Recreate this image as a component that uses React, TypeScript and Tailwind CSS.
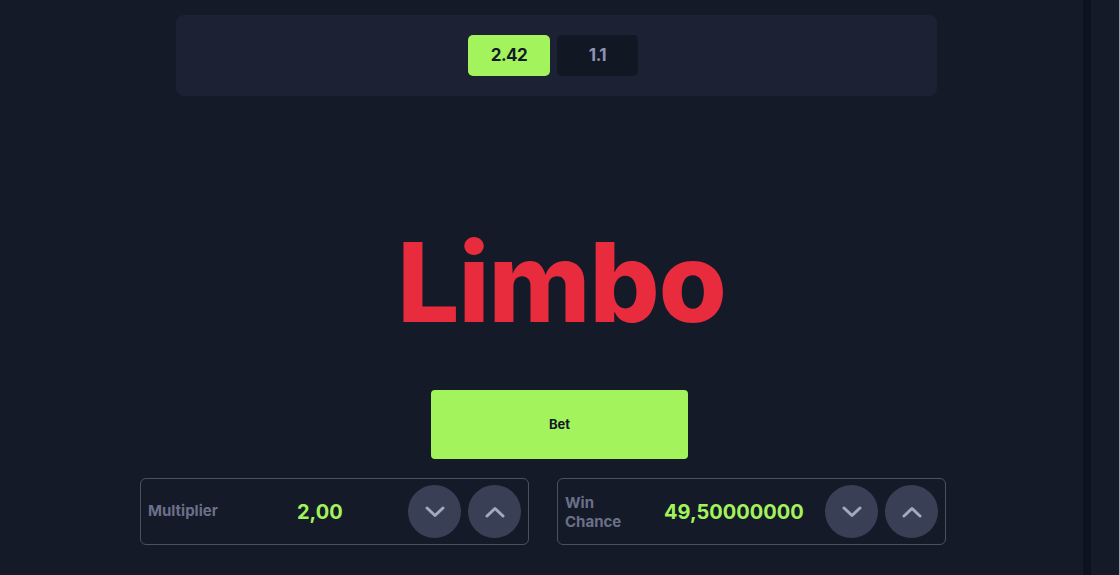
import React from "react";

function Chevron({ up }: { up?: boolean }) {
  return (
    <svg width="20" height="12" viewBox="0 0 20 12" fill="none">
      <path
        d={up ? "M2 10 L10 2.5 L18 10" : "M2 2 L10 9.5 L18 2"}
        stroke="#a3a8c4"
        strokeWidth="3"
        strokeLinecap="round"
        strokeLinejoin="round"
      />
    </svg>
  );
}

function Circles() {
  return (
    <div className="flex gap-[7px] items-center">
      <button className="w-[53px] h-[53px] rounded-full bg-[#394055] flex items-center justify-center">
        <Chevron />
      </button>
      <button className="w-[53px] h-[53px] rounded-full bg-[#394055] flex items-center justify-center">
        <Chevron up />
      </button>
    </div>
  );
}

export default function App() {
  const font = { fontFamily: "Inter, 'Noto Sans', sans-serif" };
  return (
    <div className="w-[1120px] h-[575px] bg-[#141a28] flex overflow-hidden" style={font}>
      <div className="w-[1083px] flex flex-col">
        <div className="pt-[15px] pl-[176px]">
          <div className="w-[761px] h-[81px] bg-[#1c2134] rounded-[8px] flex items-center pl-[292px] gap-[7px]">
            <div className="w-[82px] h-[41px] rounded-[5px] bg-[#a3f35c] flex items-center justify-center text-[17px] font-bold text-[#141a28] tracking-[-0.5px]">
              2.42
            </div>
            <div className="w-[81px] h-[41px] rounded-[5px] bg-[#121724] flex items-center justify-center text-[17px] font-bold text-[#8d93b5] tracking-[-0.5px]">
              1.1
            </div>
          </div>
        </div>
        <div className="h-[294px] flex items-end justify-center pl-[40px]">
          <div className="text-[110px] leading-none font-extrabold text-[#e82c3e] tracking-[-1px] mb-[53px]">
            Limbo
          </div>
        </div>
        <div className="pl-[431px] pt-[0px]">
          <button className="w-[257px] h-[69px] rounded-[4px] bg-[#a3f35c] flex items-center justify-center text-[13px] font-bold text-[#141a28]">
            Bet
          </button>
        </div>
        <div className="pl-[140px] pt-[19px] flex gap-[28px]">
          <div className="w-[389px] h-[67px] border border-[#4b5164] rounded-[6px] flex items-center pl-[7px] pr-[7px]">
            <div className="w-[149px] text-[15px] font-bold text-[#6b7089]">Multiplier</div>
            <div className="text-[20px] font-bold text-[#a3f35c]">2,00</div>
            <div className="flex-1" />
            <Circles />
          </div>
          <div className="w-[389px] h-[67px] border border-[#4b5164] rounded-[6px] flex items-center pl-[7px] pr-[7px]">
            <div className="w-[99px] text-[15px] leading-[19px] font-bold text-[#6b7089]">
              Win
              <br />
              Chance
            </div>
            <div className="text-[20px] font-bold text-[#a3f35c]">49,50000000</div>
            <div className="flex-1" />
            <Circles />
          </div>
        </div>
      </div>
      <div className="w-[8px] h-full bg-[#0d1220]" />
      <div className="flex-1 h-full" />
      <div className="w-[1px] h-full bg-[#9ca3af]" />
    </div>
  );
}
